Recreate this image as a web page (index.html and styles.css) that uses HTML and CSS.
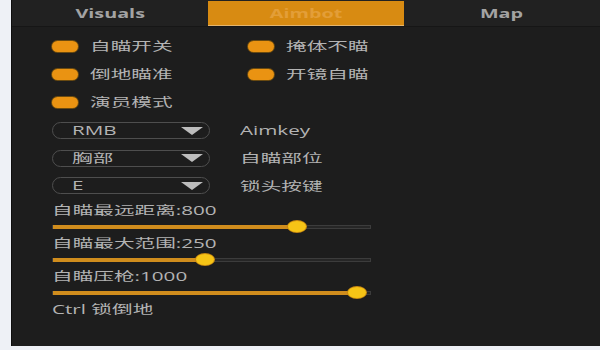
FILE: index.html
```html
<!DOCTYPE html>
<html lang="zh-CN">
<head>
    <meta charset="UTF-8">
    <title>Aimbot</title>
    <link rel="stylesheet" href="styles.css">
</head>
<body>
    <div class="panel">
        <div class="tabs">
            <div class="tab"><span class="txt">Visuals</span></div>
            <div class="tab active"><span class="txt">Aimbot</span></div>
            <div class="tab"><span class="txt">Map</span></div>
        </div>
        <div class="content">
            <div class="toggles">
                <div class="toggle"><span class="dot"></span><span class="txt">自瞄开关</span></div>
                <div class="toggle"><span class="dot"></span><span class="txt">掩体不瞄</span></div>
                <div class="toggle"><span class="dot"></span><span class="txt">倒地瞄准</span></div>
                <div class="toggle"><span class="dot"></span><span class="txt">开镜自瞄</span></div>
                <div class="toggle"><span class="dot"></span><span class="txt">演员模式</span></div>
            </div>
            <div class="selects">
                <div class="select-row">
                    <div class="select"><span class="txt">RMB</span><i class="arrow"></i></div>
                    <label class="txt">Aimkey</label>
                </div>
                <div class="select-row">
                    <div class="select"><span class="txt">胸部</span><i class="arrow"></i></div>
                    <label class="txt">自瞄部位</label>
                </div>
                <div class="select-row">
                    <div class="select"><span class="txt">E</span><i class="arrow"></i></div>
                    <label class="txt">锁头按键</label>
                </div>
            </div>
            <div class="slider">
                <div class="slider-label"><span class="txt">自瞄最远距离:800</span></div>
                <div class="track"><div class="fill" style="width: 77%"><span class="thumb"></span></div></div>
            </div>
            <div class="slider">
                <div class="slider-label"><span class="txt">自瞄最大范围:250</span></div>
                <div class="track"><div class="fill" style="width: 48%"><span class="thumb"></span></div></div>
            </div>
            <div class="slider">
                <div class="slider-label"><span class="txt">自瞄压枪:1000</span></div>
                <div class="track"><div class="fill" style="width: 96%"><span class="thumb"></span></div></div>
            </div>
            <div class="note"><span class="txt">Ctrl 锁倒地</span></div>
        </div>
    </div>
</body>
</html>
```

FILE: styles.css
```css
* {
    margin: 0;
    padding: 0;
    box-sizing: border-box;
}

body {
    background-color: #eef1f6;
    font-family: "Open Sans", "Noto Sans CJK SC", sans-serif;
    font-size: 12px;
    color: #b3b3b3;
    padding-left: 11px;
}

/* the whole UI is drawn stretched wide */
.txt {
    display: inline-block;
    transform: scaleX(1.72);
    transform-origin: left center;
    white-space: nowrap;
}

.panel {
    height: 346px;
    background: #1d1d1d;
    border-left: 1px solid #0e0e0e;
}

.tabs {
    display: flex;
    height: 27px;
    background: #212121;
    border-bottom: 1px solid #161616;
}

.tab {
    flex: 1;
    display: flex;
    align-items: center;
    justify-content: center;
    font-weight: bold;
    font-size: 11.5px;
    color: #a3a3a3;
}

.tab .txt {
    transform-origin: center;
}

.tab.active {
    background: #d88b12;
    color: #e39e38;
    margin-top: 1px;
    border-bottom: 1px solid #e4b56e;
}

.content {
    padding-left: 40px;
    padding-top: 5px;
}

.toggles {
    display: grid;
    grid-template-columns: 196px 196px;
    grid-auto-rows: 28px;
}

.toggle {
    display: flex;
    align-items: center;
    gap: 12px;
}

.dot {
    width: 26px;
    height: 11px;
    border-radius: 6px;
    background: #ea9312;
    box-shadow: 0 0 0 1px #6a4a10;
}

.selects {
    padding-top: 1px;
}

.select-row {
    display: flex;
    align-items: center;
    gap: 30px;
    height: 27.5px;
}

.select {
    width: 158px;
    height: 17px;
    border: 1.5px solid #4e4e4e;
    border-radius: 9px;
    display: flex;
    align-items: center;
    justify-content: space-between;
    padding: 0 6px 0 19px;
}

.arrow {
    width: 0;
    height: 0;
    border-left: 11px solid transparent;
    border-right: 11px solid transparent;
    border-top: 8px solid #bdbdbd;
}

.slider {
    height: 33px;
    padding-top: 3px;
}

.slider-label {
    height: 17px;
    line-height: 16px;
}

.track {
    width: 319px;
    height: 4px;
    margin-top: 5px;
    background: #262626;
    border: 1px solid #3c3c3c;
}

.fill {
    position: relative;
    height: 4px;
    margin-top: -1px;
    background: #d08d1d;
}

.thumb {
    position: absolute;
    top: -4px;
    right: -9px;
    width: 18px;
    height: 11px;
    border-radius: 50%;
    background: #f6c416;
    box-shadow: 0 0 0 1px #c98a10;
}

.note {
    line-height: 16px;
    margin-top: 3px;
}
```
